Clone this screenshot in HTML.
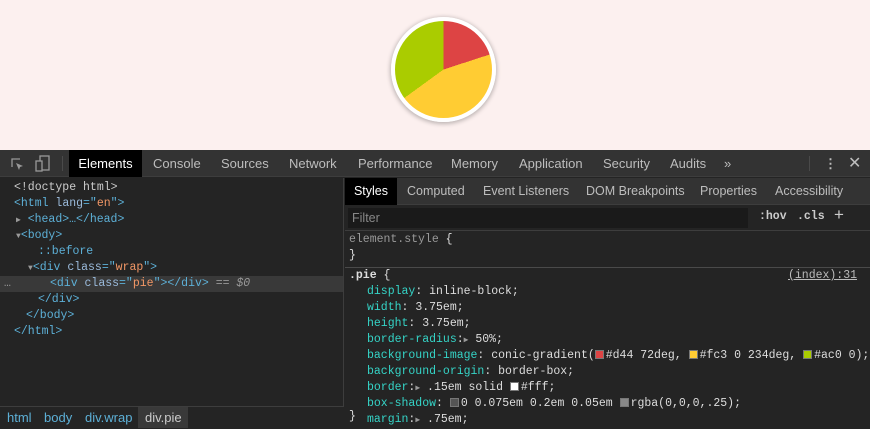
<!DOCTYPE html>
<html><head><meta charset="utf-8"><style>
*{margin:0;padding:0;box-sizing:border-box}
body{width:870px;height:427px;overflow:hidden;background:#242424;font-family:"Liberation Sans",sans-serif;position:relative}
.top{position:absolute;left:0;top:0;width:870px;height:150px;background:#fcf0ef}
.pie{position:absolute;left:391px;top:17px;width:105px;height:105px;border-radius:50%;border:4px solid #fff;background:conic-gradient(#d44 72deg,#fc3 0 234deg,#ac0 0);box-shadow:0 1px 4px 1px rgba(0,0,0,.25)}
.tb{position:absolute;left:0;top:150px;width:870px;height:27px;background:#333;border-bottom:1px solid #3d3d3d}
.tab{position:absolute;top:0;height:27px;line-height:27px;font-size:13px;color:#bdbdbd}
.mono{font-family:"Liberation Mono","DejaVu Sans Mono",monospace;font-size:11.5px}
.l{position:absolute;left:0;top:178px;width:344px;height:229px;background:#242424;border-right:1px solid #3d3d3d}
.line{position:absolute;height:16px;line-height:16px;white-space:pre;color:#5db0d7}
.g{color:#ccc}.o{color:#f29766}.a{color:#9bbbdc}
.r{position:absolute;left:345px;top:178px;width:525px;height:249px;background:#242424}
.st{position:absolute;top:0;height:27px;line-height:27px;font-size:12.5px;color:#bdbdbd}
.prop{color:#35d4c7}.v{color:#ddd}
.sw{display:inline-block;width:9px;height:9px;vertical-align:-1px;margin-right:2px;border:1px solid #777}
</style></head><body>
<div class="top"><div class="pie"></div></div>
<div class="tb">
<svg style="position:absolute;left:9px;top:6px" width="16" height="16" viewBox="0 0 16 16"><path d="M3 11V3h8" fill="none" stroke="#999" stroke-width="1.3"/><path d="M7 7l7 3-3 1-1 3z" fill="#999"/></svg>
<svg style="position:absolute;left:35px;top:5px" width="16" height="18" viewBox="0 0 16 18"><rect x="5" y="1" width="9" height="14" fill="none" stroke="#999" stroke-width="1.3"/><rect x="1" y="6" width="6" height="10" fill="#333" stroke="#999" stroke-width="1.3"/></svg>
<div style="position:absolute;left:62px;top:6px;width:1px;height:15px;background:#4a4a4a"></div>
<div class="tab" style="left:69px;width:73px;background:#000;color:#fff;text-align:center">Elements</div>
<div class="tab" style="left:153px">Console</div>
<div class="tab" style="left:221px">Sources</div>
<div class="tab" style="left:289px">Network</div>
<div class="tab" style="left:358px">Performance</div>
<div class="tab" style="left:451px">Memory</div>
<div class="tab" style="left:519px">Application</div>
<div class="tab" style="left:603px">Security</div>
<div class="tab" style="left:670px">Audits</div>
<div class="tab" style="left:724px">»</div>
<div style="position:absolute;left:809px;top:6px;width:1px;height:15px;background:#4a4a4a"></div>
<div class="tab" style="left:824px;font-weight:bold">⋮</div>
<div class="tab" style="left:848px;font-size:16px">✕</div>
</div>
<div class="l mono">
<div class="line g" style="left:14px;top:2px">&lt;!doctype html&gt;</div>
<div class="line" style="left:14px;top:18px">&lt;html <span class="a">lang</span>="<span class="o">en</span>"&gt;</div>
<div class="line" style="left:16px;top:34px"><span style="color:#999;font-size:8px">▶</span> &lt;head&gt;…&lt;/head&gt;</div>
<div class="line" style="left:16px;top:50px"><span style="color:#999;font-size:8px">▼</span>&lt;body&gt;</div>
<div class="line" style="left:38px;top:66px">::before</div>
<div class="line" style="left:28px;top:82px"><span style="color:#999;font-size:8px">▼</span>&lt;div <span class="a">class</span>="<span class="o">wrap</span>"&gt;</div>
<div style="position:absolute;left:0;top:98px;width:343px;height:16px;background:#393939"></div>
<div class="line" style="left:4px;top:98px;color:#999">…</div>
<div class="line" style="left:50px;top:98px">&lt;div <span class="a">class</span>="<span class="o">pie</span>"&gt;&lt;/div&gt; <span class="g" style="color:#999">== <i>$0</i></span></div>
<div class="line" style="left:38px;top:114px">&lt;/div&gt;</div>
<div class="line" style="left:26px;top:130px">&lt;/body&gt;</div>
<div class="line" style="left:14px;top:146px">&lt;/html&gt;</div>
</div>
<div style="position:absolute;left:0;top:406px;width:344px;height:21px;background:#242424;border-top:1px solid #3d3d3d;font-size:13px;line-height:21px;color:#5db0d7">
<span style="position:absolute;left:7px">html</span><span style="position:absolute;left:44px">body</span><span style="position:absolute;left:85px">div.wrap</span><span style="position:absolute;left:138px;width:50px;padding-left:7px;background:#393939;color:#ccc">div.pie</span></div>
<div class="r">
<div style="position:absolute;left:0;top:0;width:525px;height:27px;background:#333;border-bottom:1px solid #3d3d3d"></div>
<div class="st" style="left:0;width:52px;background:#000;color:#fff;text-align:center">Styles</div>
<div class="st" style="left:62px">Computed</div>
<div class="st" style="left:138px">Event Listeners</div>
<div class="st" style="left:241px">DOM Breakpoints</div>
<div class="st" style="left:355px">Properties</div>
<div class="st" style="left:430px">Accessibility</div>
<div style="position:absolute;left:3px;top:30px;width:400px;height:20px;background:#1a1a1a;color:#888;font-size:12.5px;line-height:20px;padding-left:4px">Filter</div>
<div class="mono" style="position:absolute;left:414px;top:32px;color:#ccc;font-weight:bold">:hov</div>
<div class="mono" style="position:absolute;left:452px;top:32px;color:#ccc;font-weight:bold">.cls</div>
<div style="position:absolute;left:489px;top:27px;color:#ccc;font-size:17px">+</div>
<div style="position:absolute;left:0;top:52px;width:525px;height:1px;background:#3d3d3d"></div>
<div class="mono line g" style="left:4px;top:54px;color:#999">element.style <span style="color:#ddd">{</span></div>
<div class="mono line" style="left:4px;top:70px;color:#ddd">}</div>
<div style="position:absolute;left:0;top:89px;width:525px;height:1px;background:#4a4a4a"></div>
<div class="mono line" style="left:4px;top:90px;color:#ddd;font-weight:bold">.pie <span style="font-weight:normal">{</span></div>
<div class="mono line" style="left:443px;top:90px;color:#bbb;text-decoration:underline">(index):31</div>
<div class="mono line prop" style="left:22px;top:106px">display<span class="v">: inline-block;</span></div>
<div class="mono line prop" style="left:22px;top:122px">width<span class="v">: 3.75em;</span></div>
<div class="mono line prop" style="left:22px;top:138px">height<span class="v">: 3.75em;</span></div>
<div class="mono line prop" style="left:22px;top:154px">border-radius<span class="v">:<span style="color:#999;font-size:8px">▶</span> 50%;</span></div>
<div class="mono line prop" style="left:22px;top:170px">background-image<span class="v">: conic-gradient(<span class="sw" style="background:#d44"></span>#d44 72deg, <span class="sw" style="background:#fc3"></span>#fc3 0 234deg, <span class="sw" style="background:#ac0"></span>#ac0 0);</span></div>
<div class="mono line prop" style="left:22px;top:186px">background-origin<span class="v">: border-box;</span></div>
<div class="mono line prop" style="left:22px;top:202px">border<span class="v">:<span style="color:#999;font-size:8px">▶</span> .15em solid <span class="sw" style="background:#fff"></span>#fff;</span></div>
<div class="mono line prop" style="left:22px;top:218px">box-shadow<span class="v">: <span class="sw" style="background:#555"></span>0 0.075em 0.2em 0.05em <span class="sw" style="background:#888"></span>rgba(0,0,0,.25);</span></div>
<div class="mono line prop" style="left:22px;top:234px">margin<span class="v">:<span style="color:#999;font-size:8px">▶</span> .75em;</span></div>
<div class="mono line" style="left:4px;top:230px;color:#ddd;top:231px"></div>
</div>
<div class="mono" style="position:absolute;left:349px;top:410px;color:#ddd">}</div>
</body></html>
